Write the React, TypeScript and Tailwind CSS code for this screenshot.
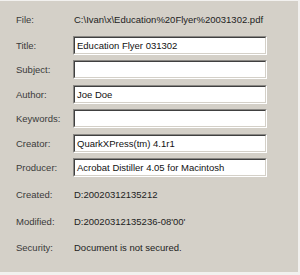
import React from 'react';

interface RowProps {
  label: string;
  value: string;
  boxed?: boolean;
  className: string;
}

function Field({ label, value, boxed, className }: RowProps) {
  return (
    <div className={`flex items-center ${className}`}>
      <div className="w-[73px] shrink-0 pl-[16px] text-[#3a3a3a]">{label}</div>
      {boxed ? (
        <div className="h-full w-[194px] border-t border-l border-[#8a8884] border-r border-b border-r-white border-b-white">
          <div className="flex h-full items-center border-t border-l border-[#404040] border-r border-b border-r-[#d4d0c8] border-b-[#d4d0c8] bg-white pl-[2px] text-[#111]">
            {value}
          </div>
        </div>
      ) : (
        <div className="pl-[1px] text-[#222]">{value}</div>
      )}
    </div>
  );
}

export default function App() {
  return (
    <div className="h-[275px] w-[300px] bg-[#f2f1ef] pt-[1px] pr-[2px] pb-[3px] font-['Liberation_Sans',Arial,sans-serif] text-[9.5px] leading-none">
      <div className="flex h-full flex-col bg-[#d4d0c8] pt-[9px]">
        <Field className="h-[20px]" label="File:" value="C:\Ivan\x\Education%20Flyer%20031302.pdf" />
        <Field className="mt-[6px] h-[19px]" label="Title:" value="Education Flyer 031302" boxed />
        <Field className="mt-[5px] h-[19px]" label="Subject:" value="" boxed />
        <Field className="mt-[6px] h-[19px]" label="Author:" value="Joe Doe" boxed />
        <Field className="mt-[5px] h-[19px]" label="Keywords:" value="" boxed />
        <Field className="mt-[6px] h-[19px]" label="Creator:" value="QuarkXPress(tm) 4.1r1" boxed />
        <Field className="mt-[5px] h-[19px]" label="Producer:" value="Acrobat Distiller 4.05 for Macintosh" boxed />
        <Field className="mt-[8px] h-[20px]" label="Created:" value="D:20020312135212" />
        <Field className="mt-[7px] h-[20px]" label="Modified:" value="D:20020312135236-08'00'" />
        <Field className="mt-[6px] h-[20px]" label="Security:" value="Document is not secured." />
      </div>
    </div>
  );
}
